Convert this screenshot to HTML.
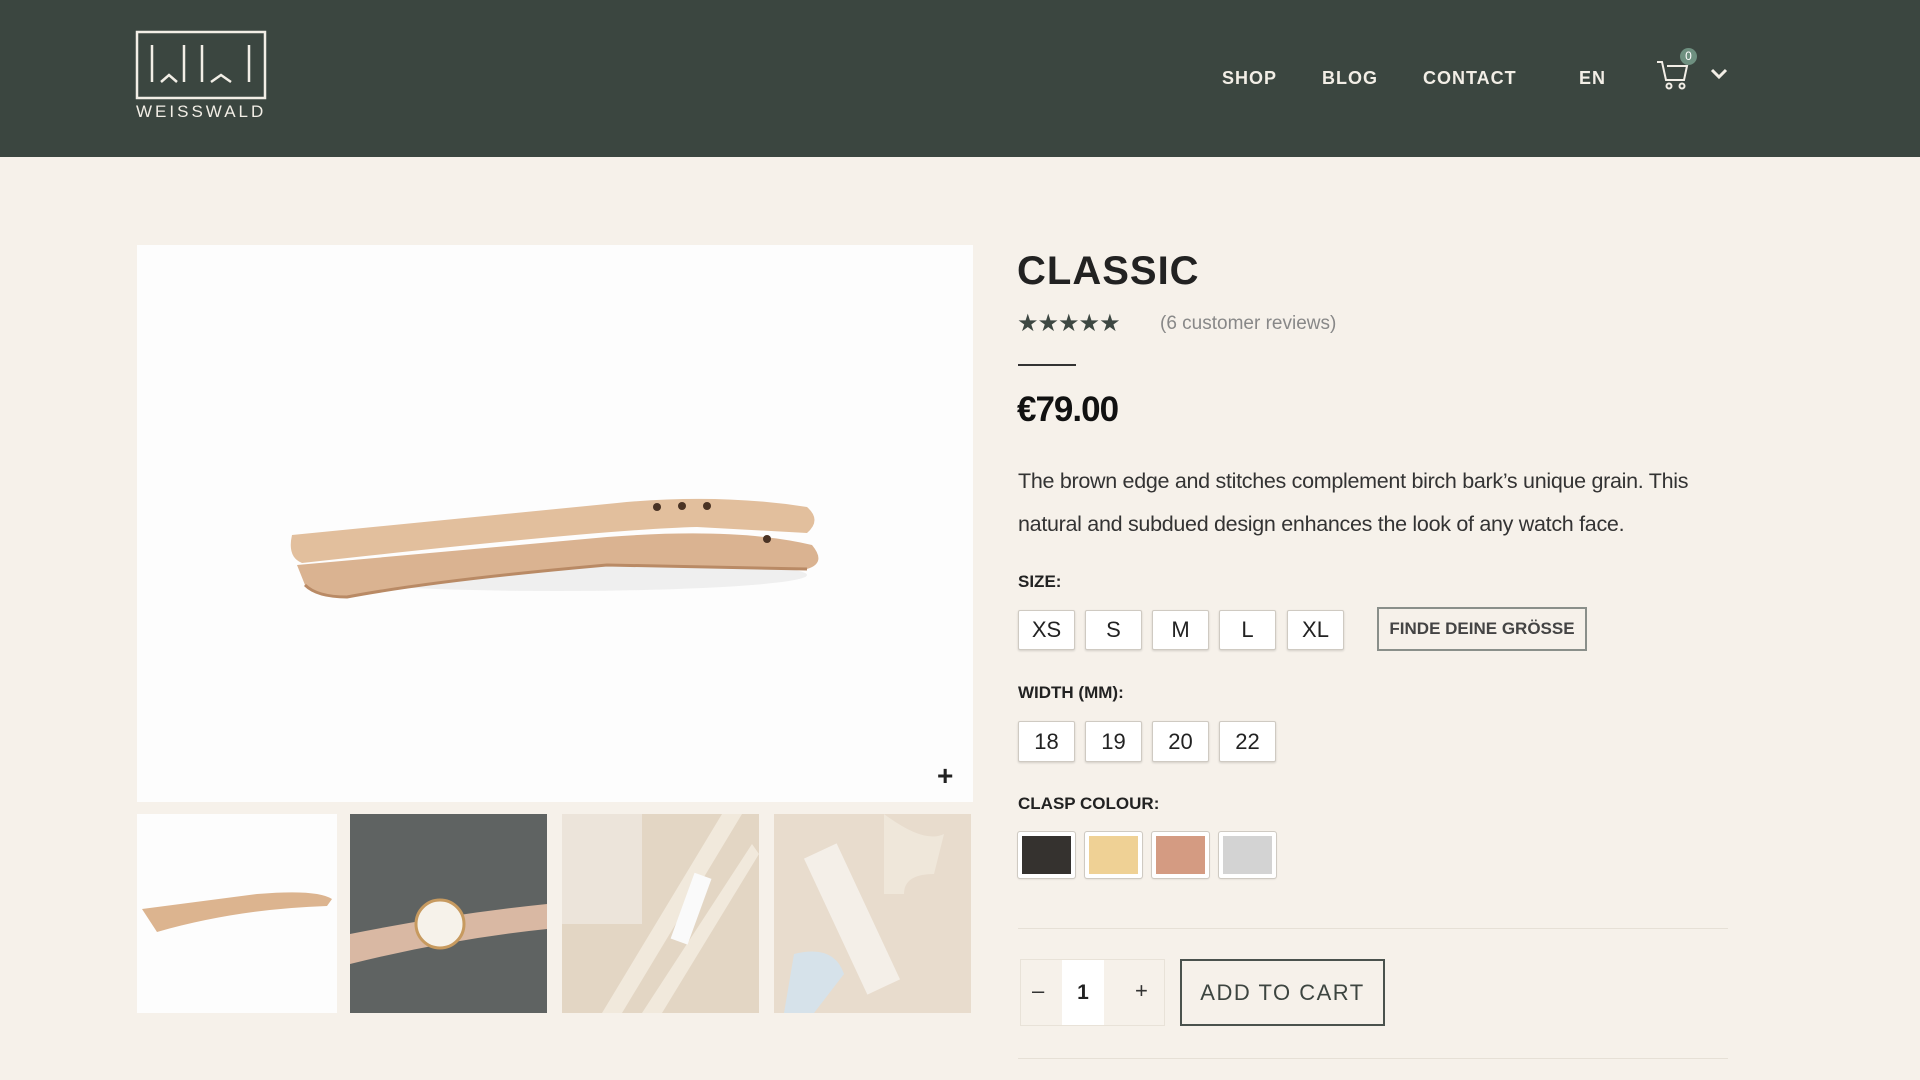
<!DOCTYPE html>
<html><head><meta charset="utf-8"><style>
*{margin:0;padding:0;box-sizing:border-box}
body{width:1920px;height:1080px;overflow:hidden;background:#f6f1ea;font-family:"Liberation Sans",sans-serif;position:relative;color:#222}
.hdr{position:absolute;left:0;top:0;width:1920px;height:157px;background:#3b4640}
.abs{position:absolute}
.nav{position:absolute;top:68px;color:#f2eee6;font-size:18px;font-weight:bold;letter-spacing:1px}
.box{position:absolute;background:#fff;border:1px solid #cfcac2;border-radius:2px;box-shadow:0 1px 2px rgba(0,0,0,.15);font-size:22px;text-align:center;color:#222}
.lbl{position:absolute;left:1018px;font-size:17px;font-weight:bold;color:#222}
</style></head><body>
<div class="hdr">
<svg class="abs" style="left:134px;top:30px" width="134" height="72" viewBox="0 0 134 72" fill="none" stroke="#f2eee6" stroke-width="2.5">
<rect x="3" y="2" width="128" height="66"/>
<path d="M18 15V52M27 52L35 45L43 52M50 15V52M68 15V52M77 52L87 45L97 52M115 15V52"/>
</svg>
<div class="abs" style="left:136px;top:102px;color:#f2eee6;font-size:17px;letter-spacing:3px">WEISSWALD</div>
<div class="nav" style="left:1222px">SHOP</div>
<div class="nav" style="left:1322px">BLOG</div>
<div class="nav" style="left:1423px">CONTACT</div>
<div class="nav" style="left:1579px">EN</div>
<svg class="abs" style="left:1655px;top:58px" width="34" height="34" viewBox="0 0 34 34" fill="none" stroke="#f2eee6" stroke-width="2"><path d="M2 4h5l4 18h18l3-14H12"/><circle cx="14" cy="28" r="2.5"/><circle cx="27" cy="28" r="2.5"/></svg>
<div class="abs" style="left:1680px;top:48px;width:17px;height:17px;border-radius:50%;background:#6e9080;color:#fff;font-size:12px;text-align:center;line-height:17px">0</div>
<svg class="abs" style="left:1710px;top:68px" width="18" height="12" viewBox="0 0 18 12" fill="none" stroke="#f2eee6" stroke-width="3"><path d="M2 2l7 7 7-7"/></svg>
</div>

<div class="abs" style="left:137px;top:245px;width:836px;height:557px;background:#fdfdfd">
<svg width="836" height="557" viewBox="0 0 836 557">
<ellipse cx="420" cy="330" rx="250" ry="16" fill="#efefef"/>
<path d="M155 290 L480 258 Q580 248 670 262 Q685 275 670 288 L560 282 Q470 284 165 318 Q150 312 155 290Z" fill="#e2bf9d"/>
<path d="M160 320 L470 292 Q600 282 675 300 Q690 318 670 324 L470 320 Q300 335 210 352 Q180 352 168 340Z" fill="#dab391"/>
<path d="M168 340 Q180 352 210 352 Q300 335 470 320 L670 324" stroke="#b98a65" stroke-width="3" fill="none"/>
<circle cx="520" cy="262" r="4" fill="#4a3324"/><circle cx="545" cy="261" r="4" fill="#4a3324"/><circle cx="570" cy="261" r="4" fill="#4a3324"/><circle cx="630" cy="294" r="4" fill="#4a3324"/>
</svg>
<div class="abs" style="left:800px;top:515px;font-size:28px;font-weight:bold;color:#222">+</div>
</div>
<div class="abs" style="left:137px;top:814px;width:200px;height:199px;background:#fdfdfd">
<svg width="200" height="199"><path d="M5 95 L120 80 Q180 75 195 85 L190 92 Q100 95 20 118Z" fill="#dcb48f"/></svg></div>
<div class="abs" style="left:350px;top:814px;width:197px;height:199px;background:#5f6362">
<svg width="197" height="199"><path d="M0 120 Q100 100 197 90 L197 115 Q100 125 0 150Z" fill="#d9b8a3"/><circle cx="90" cy="110" r="24" fill="#f6f2ea" stroke="#c79a5f" stroke-width="3"/></svg></div>
<div class="abs" style="left:562px;top:814px;width:197px;height:199px;background:#e3d6c4">
<svg width="197" height="199"><rect x="0" y="0" width="80" height="110" fill="#ece4da"/><path d="M40 199 L160 0 L180 0 L60 199Z M80 199 L190 30 L197 40 L100 199Z" fill="#f1e9dc"/><rect x="120" y="60" width="18" height="70" fill="#fafafa" transform="rotate(20 130 95)"/></svg></div>
<div class="abs" style="left:774px;top:814px;width:197px;height:199px;background:#e8dccd">
<svg width="197" height="199"><path d="M110 0 Q150 30 170 20 L160 60 Q130 60 130 80 L110 80 Z" fill="#efe7da"/><rect x="60" y="30" width="36" height="150" fill="#f4efe8" transform="rotate(-25 78 105)"/><path d="M20 140 Q60 130 70 160 L40 199 L10 199Z" fill="#d6e2ea"/></svg></div>

<div class="abs" style="left:1017px;top:249px;font-size:40px;font-weight:bold;letter-spacing:1px;color:#222">CLASSIC</div>
<div class="abs" style="left:1017px;top:309px;font-size:24px;color:#3d4742;letter-spacing:-1px">★★★★★</div>
<div class="abs" style="left:1160px;top:313px;font-size:19px;color:#888">(6 customer reviews)</div>
<div class="abs" style="left:1018px;top:364px;width:58px;height:2px;background:#333"></div>
<div class="abs" style="left:1017px;top:390px;font-size:35px;font-weight:bold;letter-spacing:-1px;color:#111">€79.00</div>
<div class="abs" style="left:1018px;top:460px;font-size:21.5px;line-height:43px;color:#333;letter-spacing:-0.3px;width:740px">The brown edge and stitches complement birch bark’s unique grain. This<br>natural and subdued design enhances the look of any watch face.</div>
<div class="lbl" style="top:572px">SIZE:</div>
<div class="box" style="left:1018px;top:610px;width:57px;height:40px;line-height:38px">XS</div>
<div class="box" style="left:1085px;top:610px;width:57px;height:40px;line-height:38px">S</div>
<div class="box" style="left:1152px;top:610px;width:57px;height:40px;line-height:38px">M</div>
<div class="box" style="left:1219px;top:610px;width:57px;height:40px;line-height:38px">L</div>
<div class="box" style="left:1287px;top:610px;width:57px;height:40px;line-height:38px">XL</div>
<div class="abs" style="left:1377px;top:607px;width:210px;height:44px;border:2px solid #8a8f8a;font-size:17px;font-weight:bold;color:#444;text-align:center;line-height:40px">FINDE DEINE GRÖSSE</div>
<div class="lbl" style="top:683px">WIDTH (MM):</div>
<div class="box" style="left:1018px;top:721px;width:57px;height:41px;line-height:39px">18</div>
<div class="box" style="left:1085px;top:721px;width:57px;height:41px;line-height:39px">19</div>
<div class="box" style="left:1152px;top:721px;width:57px;height:41px;line-height:39px">20</div>
<div class="box" style="left:1219px;top:721px;width:57px;height:41px;line-height:39px">22</div>
<div class="lbl" style="top:794px">CLASP COLOUR:</div>
<div class="box" style="left:1018px;top:832px;width:57px;height:46px;border:4px solid #fff;outline:1px solid #cfcac2;background:#35322f"></div>
<div class="box" style="left:1085px;top:832px;width:57px;height:46px;border:4px solid #fff;outline:1px solid #cfcac2;background:#efd195"></div>
<div class="box" style="left:1152px;top:832px;width:57px;height:46px;border:4px solid #fff;outline:1px solid #cfcac2;background:#d49b82"></div>
<div class="box" style="left:1219px;top:832px;width:57px;height:46px;border:4px solid #fff;outline:1px solid #cfcac2;background:#d3d3d3"></div>
<div class="abs" style="left:1018px;top:928px;width:710px;height:1px;background:#e6e0d6"></div>
<div class="abs" style="left:1020px;top:959px;width:145px;height:67px;border:1px solid #e8e2d8"></div>
<div class="abs" style="left:1062px;top:960px;width:42px;height:65px;background:#fff;text-align:center;line-height:65px;font-size:21px;font-weight:bold">1</div>
<div class="abs" style="left:1032px;top:978px;font-size:22px;color:#333">–</div>
<div class="abs" style="left:1135px;top:978px;font-size:22px;color:#333">+</div>
<div class="abs" style="left:1180px;top:959px;width:205px;height:67px;border:2px solid #4a524d;text-align:center;line-height:63px;font-size:22px;letter-spacing:1.5px;color:#3d4540">ADD TO CART</div>
<div class="abs" style="left:1018px;top:1058px;width:710px;height:1px;background:#e6e0d6"></div>
</body></html>
